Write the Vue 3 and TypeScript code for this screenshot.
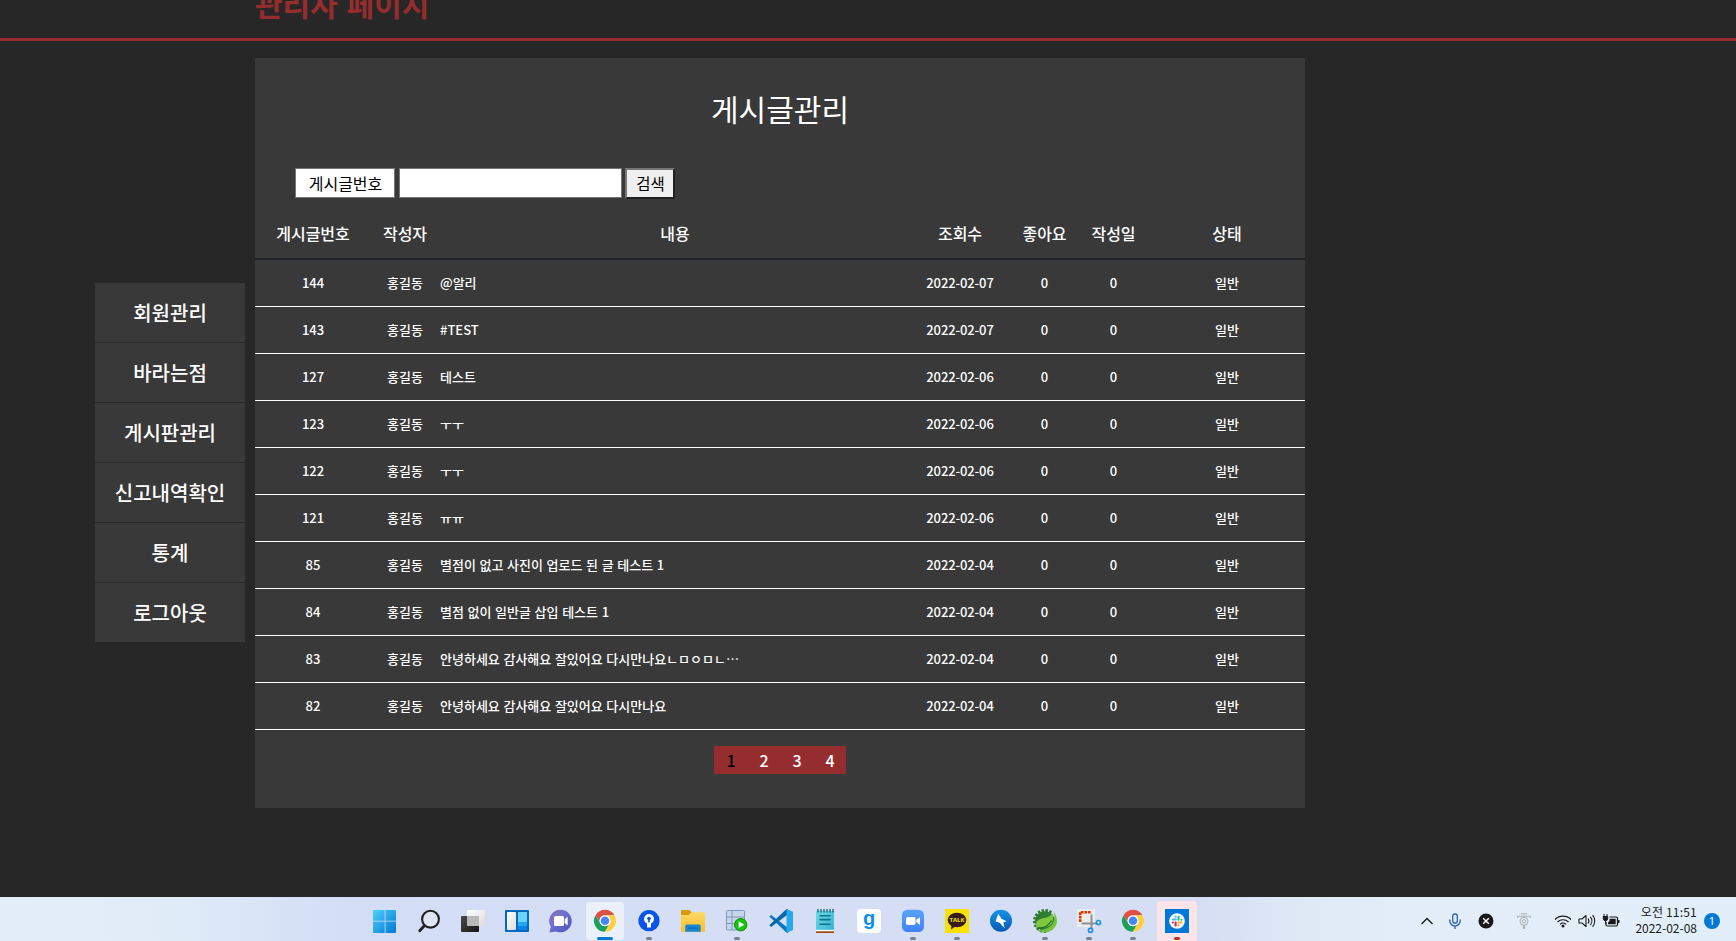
<script setup lang="ts">
interface Post {
  no: number
  writer: string
  content: string
  date: string
  likes: number
  count: number
  state: string
}

const menu: string[] = ['회원관리', '바라는점', '게시판관리', '신고내역확인', '통계', '로그아웃']
const columns: string[] = ['게시글번호', '작성자', '내용', '조회수', '좋아요', '작성일', '상태']

const makePost = (no: number, content: string, date: string): Post => ({
  no, content, date, writer: '홍길동', likes: 0, count: 0, state: '일반',
})

const posts: Post[] = [
  makePost(144, '@알리', '2022-02-07'),
  makePost(143, '#TEST', '2022-02-07'),
  makePost(127, '테스트', '2022-02-06'),
  makePost(123, 'ㅜㅜ', '2022-02-06'),
  makePost(122, 'ㅜㅜ', '2022-02-06'),
  makePost(121, 'ㅠㅠ', '2022-02-06'),
  makePost(85, '별점이 없고 사진이 업로드 된 글 테스트 1', '2022-02-04'),
  makePost(84, '별점 없이 일반글 삽입 테스트 1', '2022-02-04'),
  makePost(83, '안녕하세요 감사해요 잘있어요 다시만나요ㄴㅁㅇㅁㄴ…', '2022-02-04'),
  makePost(82, '안녕하세요 감사해요 잘있어요 다시만나요', '2022-02-04'),
]

const pages: number[] = [1, 2, 3, 4]
const current = 1
const teeth: number[] = Array.from({ length: 11 }, (_, i) => 90 + i * 21)
</script>

<template>
  <div class="screen">
    <header class="top"><h1>관리자 페이지</h1></header>

    <div class="body">
      <nav class="side">
        <a v-for="m in menu" :key="m">{{ m }}</a>
      </nav>

      <main class="panel">
        <h2>게시글관리</h2>
        <form class="search" @submit.prevent>
          <span class="select">게시글번호</span>
          <input type="text" />
          <button type="button">검색</button>
        </form>

        <div class="table">
          <div class="row head">
            <span v-for="c in columns" :key="c">{{ c }}</span>
          </div>
          <div v-for="p in posts" :key="p.no" class="row">
            <span>{{ p.no }}</span>
            <span>{{ p.writer }}</span>
            <span class="content">{{ p.content }}</span>
            <span class="date">{{ p.date }}</span>
            <span>{{ p.likes }}</span>
            <span>{{ p.count }}</span>
            <span>{{ p.state }}</span>
          </div>
        </div>

        <div class="pager">
          <a v-for="n in pages" :key="n" :class="{ on: n === current }">{{ n }}</a>
        </div>
      </main>
    </div>

    <footer class="taskbar">
      <svg width="0" height="0" class="defs">
        <defs>
          <linearGradient id="win" x1="0" y1="0" x2="1" y2="1"><stop offset="0" stop-color="#4fd0fb" /><stop offset="1" stop-color="#0078d4" /></linearGradient>
          <linearGradient id="dark" x1="0" y1="0" x2="1" y2="1"><stop offset="0" stop-color="#4a4a4a" /><stop offset="1" stop-color="#151515" /></linearGradient>
          <linearGradient id="pale" x1="0" y1="0" x2="1" y2="1"><stop offset="0" stop-color="#ffffff" /><stop offset="1" stop-color="#dcdcdc" /></linearGradient>
          <linearGradient id="chat" x1="0" y1="0" x2="1" y2="1"><stop offset="0" stop-color="#8b62ad" /><stop offset=".35" stop-color="#7376cf" /><stop offset="1" stop-color="#4a4fc0" /></linearGradient>
          <linearGradient id="fold" x1="0" y1="0" x2="0" y2="1"><stop offset="0" stop-color="#ffd866" /><stop offset="1" stop-color="#fcbd2a" /></linearGradient>
          <linearGradient id="note" x1="0" y1="0" x2="1" y2="1"><stop offset="0" stop-color="#6fdbea" /><stop offset="1" stop-color="#35b3d0" /></linearGradient>
          <linearGradient id="bolt" x1="0" y1="0" x2="0" y2="1"><stop offset="0" stop-color="#1595e6" /><stop offset="1" stop-color="#0557b8" /></linearGradient>
          <linearGradient id="zoomer" x1="0" y1="0" x2="0" y2="1"><stop offset="0" stop-color="#5aa2ff" /><stop offset="1" stop-color="#3f82fb" /></linearGradient>
          <linearGradient id="leaf" x1="0" y1="0" x2="1" y2="1"><stop offset="0" stop-color="#4fa63a" /><stop offset="1" stop-color="#84cc3c" /></linearGradient>
          <g id="chrome">
            <circle cx="23" cy="23.7" r="11" fill="#fff" />
            <path d="M13.47 18.2A11 11 0 0 1 32.53 18.2H23A5.5 5.5 0 0 0 18.24 26.45Z" fill="#de5246" />
            <path d="M13.47 18.2A11 11 0 0 0 23 34.7L27.76 26.45A5.5 5.5 0 0 1 18.24 26.45Z" fill="#1a9f5c" />
            <path d="M23 34.7A11 11 0 0 0 32.53 18.2H23A5.5 5.5 0 0 1 27.76 26.45Z" fill="#ffce44" />
            <circle cx="23" cy="23.7" r="5.3" fill="#fff" />
            <circle cx="23" cy="23.7" r="4.3" fill="#4587f3" />
          </g>
        </defs>
      </svg>

      <div class="apps">
        <svg viewBox="0 0 44 44"><path d="M12 13h10.7v10.7H11V14a1 1 0 0 1 1-1zM23.5 13H33a1 1 0 0 1 1 1v9.7H23.5zM11 24.5h11.7V36H12a1 1 0 0 1-1-1zM23.5 24.5H34V35a1 1 0 0 1-1 1h-9.5z" fill="url(#win)" /></svg>
        <svg viewBox="0 0 44 44"><circle cx="24.5" cy="22.2" r="8.4" fill="#dfe5f4" stroke="#222" stroke-width="2.1" /><path d="M18.3 28.7l-4.6 5" stroke="#222" stroke-width="2.8" stroke-linecap="round" /></svg>
        <svg viewBox="0 0 44 44"><rect x="11" y="19" width="18" height="16" rx="1" fill="url(#dark)" /><rect x="17" y="13" width="18" height="16" rx="1" fill="url(#pale)" /><path d="M17 19h12v10H18a1 1 0 0 1-1-1z" fill="#b9b9b9" /></svg>
        <svg viewBox="0 0 44 44"><rect x="11" y="13" width="24" height="22" rx="1" fill="#0669bd" /><rect x="13" y="15" width="9" height="18" rx="1" fill="url(#pale)" /><path d="M24 15h9v10h-9z" fill="#69d3fd" /><path d="M24 25h9v4h-9z" fill="#23a8f2" /><path d="M24 29h9v4h-9z" fill="#0b83e8" /></svg>
        <svg viewBox="0 0 44 44"><path d="M22.6 12.7A11.3 11.3 0 1 1 18 34.4L11.4 35.4l1.4-5.6A11.3 11.3 0 0 1 22.6 12.7z" fill="url(#chat)" /><rect x="16" y="19" width="10" height="10" rx="1.6" fill="#fff" /><path d="M26.7 22.3l3-2.5v8.8l-3-2.5z" fill="#fff" /></svg>
        <svg viewBox="0 0 44 44"><rect x="4" y="5" width="38" height="38" rx="3.5" fill="#eaf0fc" /><use href="#chrome" /><rect x="15" y="40" width="16" height="3" rx="1.5" fill="#0078d4" /></svg>
        <svg viewBox="0 0 44 44"><circle cx="23" cy="23.7" r="10.6" fill="#0653ee" /><circle cx="23" cy="22" r="5" fill="#fff" /><path d="M21 25h4v5.5h-4z" fill="#fff" /><circle cx="23" cy="21.5" r="1.8" fill="#0653ee" /><path d="M22.2 22h1.6v3.5h-1.6z" fill="#0653ee" /><rect x="20" y="40" width="6" height="3" rx="1.5" fill="#7b818c" /></svg>
        <svg viewBox="0 0 44 44"><path d="M12 13h7.5l2 2.3L19 18h-8v-4a1 1 0 0 1 1-1z" fill="#d99a0c" /><path d="M11 18h8l2.8-2.7H34a1 1 0 0 1 1 1v17.5a1 1 0 0 1-1 1H12a1 1 0 0 1-1-1z" fill="url(#fold)" /><path d="M15.3 34.8V29a1.5 1.5 0 0 1 1.5-1.5h12.4a1.5 1.5 0 0 1 1.5 1.5v5.8z" fill="#1687d4" /><path d="M18 30.6h10v1h-10z" fill="#0865ad" /></svg>
        <svg viewBox="0 0 44 44"><rect x="12.5" y="13.5" width="18" height="19.5" rx="1" fill="#c5d6ea" stroke="#7c98bd" /><path d="M13 20h17.5M13 26.5h17.5M18 14v19" stroke="#7c98bd" /><circle cx="26.7" cy="27.7" r="6.2" fill="#16c60c" stroke="#128f0a" /><path d="M24.7 24.3l5.5 3.4-5.5 3.4z" fill="#fff" /><rect x="20" y="40" width="6" height="3" rx="1.5" fill="#7b818c" /></svg>
        <svg viewBox="0 0 44 44"><path d="M11.3 19.5l1.800-1.6 17 13v5L28.500 35.600z" fill="#0a78bf" /><path d="M11.300 28.300l1.800 1.700L30 17.300V12l-2 .5z" fill="#0467ac" /><path d="M28.500 12L35 14.800V33L28.500 36z" fill="#27a7ee" /></svg>
        <svg viewBox="0 0 44 44"><rect x="14" y="14" width="18" height="20" fill="url(#note)" /><path d="M14 32.800h18v1.500H14z" fill="#fff" /><path d="M14 34.300h18V36H14z" fill="#a34a10" /><path d="M16 12v3.500M19 12v3.500M22 12v3.500M25 12v3.500M28 12v3.500M31 12v3.500" stroke="#155f74" stroke-width="1.300" /><path d="M18 18.700h10M18 22.600h10M18 27.300h10" stroke="#12718a" stroke-width="1.600" stroke-linecap="round" /></svg>
        <svg viewBox="0 0 44 44"><rect x="11" y="12" width="24" height="24" rx="4" fill="#fff" /><text x="23" y="27.500" text-anchor="middle" class="g">g</text></svg>
        <svg viewBox="0 0 44 44"><rect x="12" y="12.700" width="22" height="22.300" rx="5.500" fill="url(#zoomer)" /><rect x="16" y="20" width="9.500" height="8" rx="1.800" fill="#fff" /><path d="M26.300 22.700l3.700-2.500v7.600l-3.700-2.500z" fill="#fff" /><rect x="20" y="40" width="6" height="3" rx="1.500" fill="#7b818c" /></svg>
        <svg viewBox="0 0 44 44"><rect x="11" y="12" width="24" height="24" fill="#fae100" /><ellipse cx="23" cy="23" rx="9.300" ry="7.300" fill="#371d1e" /><path d="M17.500 27.500l-.5 5 5-3.500z" fill="#371d1e" /><text x="23" y="25.300" text-anchor="middle" class="talk">TALK</text><rect x="20" y="40" width="6" height="3" rx="1.500" fill="#7b818c" /></svg>
        <svg viewBox="0 0 44 44"><circle cx="23" cy="23.700" r="11" fill="url(#bolt)" /><path d="M20.300 16.800L17.500 24.600l4.300 1.200L26.600 31.500 25.300 25.500 28.700 24.300 23.500 21.800z" fill="#fff" /></svg>
        <svg viewBox="0 0 44 44"><g stroke="#2d7d32" stroke-width="2.500"><path v-for="a in teeth" :key="a" d="M31 24h4" :transform="`rotate(${a} 23 24)`" /></g><circle cx="23" cy="24" r="9.800" fill="#2d7d32" /><path d="M31.500 14.500c3.500 4.500 5 11 1.500 15.500-4 6-12.500 7.200-17.500 3 7 0 14.500-2.500 16.500-9.500 1-3.500.5-6-.5-9z" fill="url(#leaf)" /><path d="M30.500 16.500c1.300 5.500.5 10.500-4 12.800-4 2-8.500 1.200-12 .7-1.500-4 .8-7.500 5.500-8.500 4.500-1 8-1.500 10.500-5z" fill="#7fc940" /><path d="M14.500 31c7 .5 12-1.800 15-7.500" stroke="#246f2a" stroke-width="1.200" fill="none" /><rect x="20" y="40" width="6" height="3" rx="1.500" fill="#7b818c" /></svg>
        <svg viewBox="0 0 44 44"><rect x="11" y="12" width="18" height="18" rx="1" fill="#ececed" /><path d="M14.200 25V15.200H25" stroke="#d83b01" stroke-width="2.600" fill="none" stroke-dasharray="2.700 .8" /><path d="M25.500 17.500V32M15.500 26.500H31" stroke="#8b9096" stroke-width="2" fill="none" /><circle cx="24.500" cy="33.300" r="2" fill="#fff" stroke="#1790df" stroke-width="1.700" /><circle cx="32.500" cy="25.500" r="2" fill="#fff" stroke="#1790df" stroke-width="1.700" /><rect x="20" y="40" width="6" height="3" rx="1.500" fill="#7b818c" /></svg>
        <svg viewBox="0 0 44 44"><use href="#chrome" /><rect x="20" y="40" width="6" height="3" rx="1.500" fill="#7b818c" /></svg>
        <svg viewBox="0 0 44 44"><rect x="3" y="4" width="40" height="42" rx="4" fill="#fce5e8" /><path d="M11 12h24v24H11z" fill="#0078d7" /><circle cx="23" cy="24" r="7.800" fill="#fff" /><g stroke-width="2.100" stroke-linecap="round"><path d="M18.800 22.500h3" stroke="#36c5f0" /><path d="M21.600 19.500v.2" stroke="#36c5f0" /><path d="M24.500 19.800v3" stroke="#2eb67d" /><path d="M27.400 22.700h.1" stroke="#2eb67d" /><path d="M24.400 25.500h3" stroke="#ecb22e" /><path d="M24.500 28.400v.1" stroke="#ecb22e" /><path d="M21.600 25.500v2.900" stroke="#e01e5a" /><path d="M18.800 25.500h.1" stroke="#e01e5a" /></g><rect x="20" y="40" width="6" height="3" rx="1.500" fill="#c42b1c" /></svg>
      </div>

      <div class="tray">
        <svg class="chev" viewBox="0 0 14 16"><path d="M1.500 11L7 5.500 12.500 11" fill="none" stroke="#1a1a1a" stroke-width="1.400" /></svg>
        <svg class="mic" viewBox="0 0 14 16"><rect x="4.700" y=".8" width="4.600" height="9.400" rx="2.300" fill="#dbe9fa" stroke="#1c54b0" stroke-width="1.200" /><path d="M1.800 6.500v1.300a5.200 5.200 0 0 0 10.400 0V6.500M7 13v3" fill="none" stroke="#1c54b0" stroke-width="1.200" /></svg>
        <svg class="close" viewBox="0 0 16 16"><circle cx="8" cy="8" r="7.500" fill="#191919" /><path d="M5.200 5.200l5.600 5.600M10.800 5.200l-5.600 5.600" stroke="#fff" stroke-width="1.500" /></svg>
        <svg class="ime" viewBox="0 0 16 16"><g fill="none" stroke="#a9adb2" stroke-width="1"><path d="M5 .8h6M1.500 3.200h13M1.500 3.200v1.500M14.500 3.200v1.500M7.300 12v4M8.700 12v4" /><circle cx="8" cy="8.300" r="4" /><circle cx="8" cy="8.300" r="1.700" /></g></svg>
        <svg class="wifi" viewBox="0 0 18 16"><g fill="none" stroke="#1a1a1a" stroke-width="1.200"><path d="M1 6.500a11.300 11.300 0 0 1 16 0M3.500 9a7.800 7.800 0 0 1 11 0M6 11.400a4.300 4.300 0 0 1 6 0" /></g><circle cx="9" cy="13" r="1.500" fill="#1a1a1a" /></svg>
        <svg class="vol" viewBox="0 0 18 16"><g fill="none" stroke="#1a1a1a" stroke-width="1.100"><path d="M1 6h3l4-3.500v11L4 10H1z" stroke-linejoin="round" /><path d="M10 5.500a4 4 0 0 1 0 5M12.300 3.800a6.500 6.500 0 0 1 0 8.400M14.600 2.200a9 9 0 0 1 0 11.600" /></g></svg>
        <svg class="bat" viewBox="0 0 18 16"><path d="M7.500 4H14a1.500 1.500 0 0 1 1.500 1.500v6A1.500 1.500 0 0 1 14 13H5.500A1.500 1.500 0 0 1 4 11.500V9" fill="none" stroke="#1a1a1a" stroke-width="1.200" /><path d="M7.500 5.700h6.200v5.600H6V9.500l1.500-1.500zM16 7h1.500v3H16z" fill="#1a1a1a" /><path d="M2 1v3M5 1v3M1.300 3.500h4.400V5.500a2.200 2.200 0 0 1-4.400 0zM3.500 7v4" fill="#1a1a1a" stroke="#1a1a1a" stroke-width="1" /></svg>
        <div class="clock"><span>오전 11:51</span><span>2022-02-08</span></div>
        <span class="badge">1</span>
      </div>
    </footer>
  </div>
</template>

<style>
body {
  margin: 0;
  overflow: hidden;
  background: #272727;
}
</style>

<style scoped>
.screen {
  width: 1736px;
  height: 941px;
  display: flex;
  flex-direction: column;
  overflow: hidden;
  background: #272727;
  color: #fff;
  font-family: "Noto Sans CJK KR", "Noto Sans", sans-serif;
  font-weight: 500;
}
.top {
  flex: none;
  height: 38px;
  display: flex;
  align-items: flex-end;
  border-bottom: 3px solid #952d2f;
}
.top h1 {
  margin: 0 0 13px 255px;
  font-size: 30px;
  line-height: 44px;
  font-weight: 700;
  word-spacing: 2px;
  color: #952d2f;
}
.body {
  flex: 1;
  display: flex;
  align-items: flex-start;
  gap: 10px;
  padding: 17px 0 0 95px;
}
.side {
  width: 150px;
  margin-top: 225px;
  display: flex;
  flex-direction: column;
  gap: 1px;
}
.side a {
  height: 59px;
  line-height: 59px;
  background: #393939;
  text-align: center;
  font-size: 20px;
}
.panel {
  width: 1050px;
  height: 750px;
  background: #393939;
}
.panel h2 {
  margin: 0;
  padding-top: 28px;
  height: 82px;
  font-size: 30px;
  line-height: 44px;
  font-weight: 400;
  text-align: center;
}
.search {
  display: flex;
  align-items: flex-start;
  height: 31px;
  padding-left: 40px;
}
.select {
  box-sizing: border-box;
  width: 100px;
  height: 30px;
  border: 1px solid #767676;
  background: #fff;
  color: #000;
  font-size: 16px;
  font-weight: 400;
  line-height: 29px;
  text-align: center;
  text-indent: 1px;
}
.search input {
  box-sizing: border-box;
  width: 223px;
  height: 30px;
  margin: 0 3px 0 4px;
  border: 1px solid #767676;
  border-radius: 0;
  background: #fff;
}
.search button {
  box-sizing: border-box;
  width: 50px;
  height: 31px;
  padding: 0 0 0 1px;
  border: 2px solid;
  border-color: #767676 #212121 #212121 #767676;
  border-radius: 0;
  background: #efefef;
  color: #000;
  font: 400 15.5px/27px "Noto Sans CJK KR", sans-serif;
}
.row {
  box-sizing: border-box;
  display: grid;
  grid-template-columns: 116px 68px 472px 98px 71px 67px 158px;
  height: 47px;
  border-bottom: 1px solid #fff;
  font-size: 13px;
  line-height: 46px;
  text-align: center;
  white-space: nowrap;
}
.row.head {
  height: 61px;
  border-bottom: 2px solid #212529;
  font-size: 16px;
  line-height: 68px;
}
.row span:last-child {
  padding-left: 2px;
}
.row .content {
  padding-left: 1px;
  text-align: left;
  word-spacing: 0.7px;
}
.row .date {
  letter-spacing: -0.12px;
}
.pager {
  display: flex;
  width: 132px;
  height: 28px;
  margin: 16px auto 0;
  background: #952d2f;
}
.pager a {
  flex: 1;
  text-align: center;
  font-size: 16px;
  line-height: 29px;
  text-indent: 1px;
}
.pager .on {
  color: #000;
}
.taskbar {
  flex: none;
  box-sizing: border-box;
  height: 44px;
  display: flex;
  justify-content: space-between;
  padding: 0 16px 0 362px;
  background: linear-gradient(90deg, #e3eef8 0, #e0ebf8 180px, #d3ddf6 350px, #d4def5 600px, #d6def4 1200px, #dfe9f6 1300px, #e2edf8 1400px, #e2eef9 100%);
}
.defs {
  position: absolute;
}
.apps {
  display: flex;
}
.apps svg {
  width: 44px;
  height: 44px;
}
.g {
  font: 700 20px "Liberation Sans", sans-serif;
  fill: #0b8fee;
}
.talk {
  font: 700 6px "Open Sans", sans-serif;
  fill: #fae100;
}
.tray {
  display: flex;
  align-items: center;
  color: #1a1a1a;
}
.tray svg {
  height: 16px;
  margin-top: 4px;
}
.chev { width: 14px; margin-right: 14px; }
.mic { width: 14px; margin-right: 16px; }
.close { width: 16px; margin-right: 22px; }
.ime { width: 16px; margin-right: 22px; }
.wifi { width: 18px; margin-right: 6px; }
.vol { width: 18px; margin-right: 6px; }
.bat { width: 18px; margin-right: 13px; }
.clock {
  width: 64px;
  margin-right: 7px;
  margin-top: 2px;
  display: flex;
  flex-direction: column;
  align-items: flex-end;
  font-size: 12px;
  line-height: 16px;
  font-weight: 400;
  white-space: nowrap;
}
.clock span:first-child {
  letter-spacing: 0.2px;
}
.badge {
  width: 16px;
  height: 16px;
  margin-top: 4px;
  border-radius: 50%;
  background: #0078d4;
  color: #fff;
  font: 400 11px/16px "Noto Sans", sans-serif;
  text-align: center;
}
</style>
